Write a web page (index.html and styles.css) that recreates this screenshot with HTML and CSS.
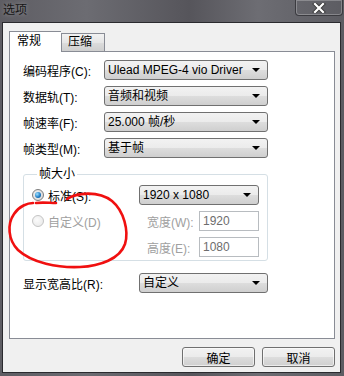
FILE: index.html
```html
<!DOCTYPE html>
<html lang="zh-CN">

<head>
    <meta charset="UTF-8">
    <title>选项</title>
    <link rel="stylesheet" href="styles.css">
</head>

<body>
    <div class="window">
        <!-- Title bar -->
        <div class="titlebar">
            <span class="title">选项</span>
            <div class="close-btn">
                <svg width="14" height="10" viewBox="0 0 14 10">
                    <path d="M3,1 L11,9 M11,1 L3,9" stroke="#3a3a3a" stroke-width="4" stroke-linecap="square" />
                    <path d="M3,1 L11,9 M11,1 L3,9" stroke="#fff" stroke-width="2.2" stroke-linecap="square" />
                </svg>
            </div>
        </div>

        <div class="client">
            <!-- Tabs -->
            <div class="tabs">
                <div class="tab active">常规</div>
                <div class="tab">压缩</div>
            </div>

            <div class="tab-page">
                <div class="row">
                    <span class="label">编码程序(C):</span>
                    <div class="combo">Ulead MPEG-4 vio Driver</div>
                </div>
                <div class="row">
                    <span class="label">数据轨(T):</span>
                    <div class="combo">音频和视频</div>
                </div>
                <div class="row">
                    <span class="label">帧速率(F):</span>
                    <div class="combo">25.000 帧/秒</div>
                </div>
                <div class="row">
                    <span class="label">帧类型(M):</span>
                    <div class="combo">基于帧</div>
                </div>

                <!-- Frame size group -->
                <fieldset class="group">
                    <legend>帧大小</legend>
                    <div class="group-row">
                        <span class="option"><span class="radio checked"></span>标准(S):</span>
                        <div class="combo small">1920 x 1080</div>
                    </div>
                    <div class="group-row">
                        <span class="option wide disabled"><span class="radio"></span>自定义(D)</span>
                        <span class="field-label">宽度(W):</span>
                        <div class="textbox">1920</div>
                    </div>
                    <div class="group-row">
                        <span class="option wide"></span>
                        <span class="field-label">高度(E):</span>
                        <div class="textbox">1080</div>
                    </div>
                </fieldset>

                <div class="row aspect">
                    <span class="label long">显示宽高比(R):</span>
                    <div class="combo medium">自定义</div>
                </div>
            </div>

            <div class="buttons">
                <button class="btn">确定</button>
                <button class="btn">取消</button>
            </div>
        </div>

        <!-- hand-drawn red mark -->
        <svg class="scribble" width="344" height="376" viewBox="0 0 344 376">
            <path d="M67,199 C76,193 98,190 112,201 C124,211 129,231 125,244 C120,259 100,266 80,267 C58,268 32,263 18,250 C8,240 7,224 14,214 C19,206 28,203 33,203 M36,203 C42,202 50,203 56,203"
                fill="none" stroke="#f01010" stroke-width="2.6" stroke-linecap="round" />
        </svg>
    </div>
</body>

</html>
```

FILE: styles.css
```css
body {
    margin: 0;
    font-family: "Liberation Sans", "Noto Sans CJK SC", sans-serif;
    font-size: 12px;
    color: #000;
}

.window {
    position: relative;
    width: 344px;
    height: 376px;
    box-sizing: border-box;
    background: linear-gradient(90deg, #5e5d63 0%, #6c6c72 25%, #56555b 55%, #6d6d73 75%, #5c5c62 100%);
    display: flex;
    flex-direction: column;
}

/* Title bar */
.titlebar {
    height: 22px;
    display: flex;
    justify-content: space-between;
    align-items: flex-start;
}

.title {
    margin: 3px 0 0 3px;
    line-height: 15px;
    color: #161616;
    text-shadow: 0 0 4px rgba(255, 255, 255, 0.35);
}

.close-btn {
    width: 46px;
    height: 15px;
    margin-right: 1px;
    border: 1px solid #3b3b40;
    border-top: none;
    border-radius: 0 0 4px 4px;
    box-shadow: inset 0 0 0 1px rgba(255, 255, 255, 0.25);
    display: flex;
    align-items: center;
    justify-content: center;
}

.close-btn svg {
    display: block;
}

.client {
    flex: 1;
    margin: 0 3px 3px 2px;
    border: 1px solid #2a2a2e;
    background-color: #f0f0f0;
    padding: 8px 5px 0 6px;
}

/* Tabs */
.tabs {
    display: flex;
    height: 20px;
    align-items: flex-start;
}

.tab {
    position: relative;
    box-sizing: border-box;
    height: 18px;
    margin-top: 2px;
    padding: 0 8px;
    border: 1px solid #898c95;
    border-bottom: none;
    background: linear-gradient(#f2f2f2, #e6e6e6 50%, #dcdcdc 51%, #cfcfcf);
    line-height: 16px;
}

.tab.active {
    height: 21px;
    margin-top: 0;
    width: 52px;
    background: #fff;
    z-index: 1;
    line-height: 19px;
    padding: 0 7px;
    border-right: none;
}

.tab.active + .tab {
    width: 44px;
    padding: 0 6px;
}

.tab-page {
    box-sizing: border-box;
    height: 288px;
    border: 1px solid #898c95;
    background-color: #fff;
    padding: 8px 0 0 13px;
}

.row {
    display: flex;
    align-items: center;
    height: 20px;
    margin-bottom: 6px;
}

.label {
    width: 81px;
}

.label.long {
    width: 116px;
}

.combo {
    box-sizing: border-box;
    width: 164px;
    height: 20px;
    border: 1px solid #707070;
    border-radius: 3px;
    background: linear-gradient(#f2f2f2, #ebebeb 50%, #dddddd 51%, #cfcfcf);
    padding: 0 18px 0 3px;
    line-height: 18px;
    position: relative;
    white-space: nowrap;
}

.combo::after {
    content: "";
    position: absolute;
    right: 7px;
    top: 7px;
    border-left: 4px solid transparent;
    border-right: 4px solid transparent;
    border-top: 4px solid #000;
}

.combo.small {
    width: 120px;
}

.combo.medium {
    width: 129px;
}

/* Group box */
.group {
    width: 245px;
    box-sizing: border-box;
    margin: 9px 0 0 0;
    padding: 4px 8px 3px 8px;
    border: 1px solid #d5dfe5;
    border-radius: 3px;
}

.group legend {
    padding: 0 2px;
    margin-left: 5px;
    line-height: 14px;
}

.group-row {
    display: flex;
    align-items: center;
    height: 20px;
    margin-bottom: 6px;
}

.group-row:last-child {
    margin-bottom: 0;
}

.option {
    width: 107px;
    display: flex;
    align-items: center;
}

.option.wide {
    width: 115px;
}

.disabled {
    color: #a0a0a0;
}

.radio {
    box-sizing: border-box;
    width: 12px;
    height: 12px;
    margin-right: 4px;
    border-radius: 50%;
    border: 1px solid #c4c4c4;
    background: radial-gradient(circle at 40% 40%, #fbfbfb, #e6e6e6);
    display: flex;
    align-items: center;
    justify-content: center;
}

.radio.checked {
    border-color: #7d7d7d;
    background: radial-gradient(circle at 40% 40%, #f4f4f4, #d2d2d2);
}

.radio.checked::after {
    content: "";
    width: 6px;
    height: 6px;
    border-radius: 50%;
    background: radial-gradient(circle at 35% 35%, #9be0ff, #1b78c2 60%, #0c4d85);
}

.field-label {
    width: 52px;
    color: #a0a0a0;
}

.textbox {
    box-sizing: border-box;
    width: 60px;
    height: 20px;
    border: 1px solid #b8bcc0;
    padding: 0 3px;
    line-height: 18px;
    color: #6d6d6d;
}

.row.aspect {
    margin-top: 12px;
}

/* Dialog buttons */
.buttons {
    display: flex;
    justify-content: flex-end;
    gap: 7px;
    margin-top: 8px;
}

.btn {
    box-sizing: border-box;
    width: 73px;
    height: 20px;
    padding: 0;
    font-family: inherit;
    font-size: 12px;
    color: #000;
    border: 1px solid #707070;
    border-radius: 3px;
    background: linear-gradient(#f2f2f2, #ebebeb 50%, #dddddd 51%, #cfcfcf);
    box-shadow: inset 0 0 0 1px rgba(255, 255, 255, 0.6);
}

.scribble {
    position: absolute;
    left: 0;
    top: 0;
    pointer-events: none;
}
```
